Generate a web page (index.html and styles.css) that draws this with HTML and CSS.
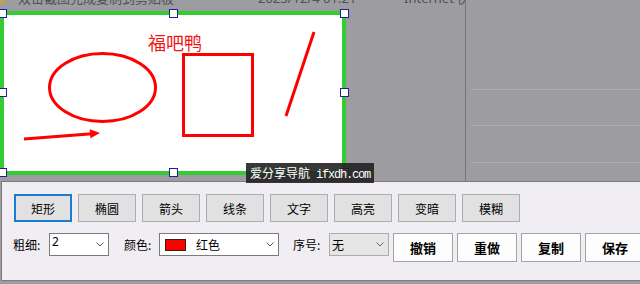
FILE: index.html
```html
<!DOCTYPE html>
<html lang="zh-CN">
<head>
<meta charset="utf-8">
<title>截图编辑</title>
<link rel="stylesheet" href="styles.css">
</head>
<body>
<div class="screen">
  <span class="bg-icon"></span>
  <span class="bg-text t1">双击截图完成复制到剪贴板</span>
  <span class="bg-text t2">2023/12/4 01:21</span>
  <span class="bg-text t3">Internet 快捷方式</span>
  <div class="bg-divider"></div>
  <div class="bg-hline h1"></div>
  <div class="bg-hline h2"></div>
  <div class="bg-hline h3"></div>

  <div class="capture">
    <svg class="drawing" viewBox="4 15 338 156" width="338" height="156">
      <text x="148" y="50" class="draw-text">福吧鸭</text>
      <ellipse cx="102.5" cy="87.5" rx="53" ry="34" fill="none" stroke="#f00" stroke-width="3"/>
      <rect x="183.5" y="54.5" width="69" height="81" fill="none" stroke="#f00" stroke-width="3"/>
      <line x1="314" y1="32" x2="286" y2="116" stroke="#f00" stroke-width="3"/>
      <line x1="24" y1="139" x2="92" y2="133.8" stroke="#f00" stroke-width="3"/>
      <polygon points="100,133 90.4,138.3 89.7,129.3" fill="#f00"/>
    </svg>
  </div>

  <span class="handle hx0 hy0"></span>
  <span class="handle hx1 hy0"></span>
  <span class="handle hx2 hy0"></span>
  <span class="handle hx0 hy1"></span>
  <span class="handle hx2 hy1"></span>
  <span class="handle hx0 hy2"></span>
  <span class="handle hx1 hy2"></span>
  <span class="handle hx2 hy2"></span>

  <div class="watermark"><span class="wm-cn">爱分享导航</span><span class="wm-en"> ifxdh.com</span></div>
</div>

<div class="panel">
  <div class="tools">
    <button class="tool active">矩形</button>
    <button class="tool">椭圆</button>
    <button class="tool">箭头</button>
    <button class="tool">线条</button>
    <button class="tool">文字</button>
    <button class="tool">高亮</button>
    <button class="tool">变暗</button>
    <button class="tool">模糊</button>
  </div>
  <div class="opts">
    <span class="label lbl-size">粗细:</span>
    <div class="combo combo-size">
      <span class="combo-val">2</span>
      <svg class="chev" width="8" height="5" viewBox="0 0 8 5"><path d="M0.5 0.5 L4 4 L7.5 0.5" fill="none" stroke="#555" stroke-width="1"/></svg>
    </div>
    <span class="label lbl-color">颜色:</span>
    <div class="combo combo-color">
      <span class="swatch"></span>
      <span class="combo-val color-name">红色</span>
      <svg class="chev" width="8" height="5" viewBox="0 0 8 5"><path d="M0.5 0.5 L4 4 L7.5 0.5" fill="none" stroke="#555" stroke-width="1"/></svg>
    </div>
    <span class="label lbl-num">序号:</span>
    <div class="combo combo-num">
      <span class="combo-val">无</span>
      <svg class="chev" width="8" height="5" viewBox="0 0 8 5"><path d="M0.5 0.5 L4 4 L7.5 0.5" fill="none" stroke="#666" stroke-width="1"/></svg>
    </div>
    <div class="actions">
      <button class="act">撤销</button>
      <button class="act">重做</button>
      <button class="act">复制</button>
      <button class="act">保存</button>
    </div>
  </div>
</div>
</body>
</html>
```

FILE: styles.css
```css
* { box-sizing: border-box; }

html, body {
  margin: 0;
  padding: 0;
}

body {
  width: 640px;
  height: 284px;
  overflow: hidden;
  background: #9d9da1;
  font-family: "Noto Sans CJK SC", "Noto Sans", sans-serif;
  font-size: 12px;
  color: #000;
}

.screen {
  position: relative;
  height: 181px;
}

.bg-icon {
  position: absolute;
  left: 0;
  top: 0;
  width: 6px;
  height: 4px;
  background: #b9a25a;
}

.bg-text {
  position: absolute;
  top: -10px;
  font-size: 13px;
  line-height: 16px;
  color: #505054;
  white-space: nowrap;
}
.t1 { left: 18px; }
.t2 { left: 258px; font-family: "Noto Sans", sans-serif; }
.t3 { left: 404px; font-family: "Noto Sans", sans-serif; width: 62px; overflow: hidden; }

.bg-divider {
  position: absolute;
  left: 465px;
  top: 0;
  width: 1px;
  height: 181px;
  background: #747478;
}

.bg-hline {
  position: absolute;
  left: 471px;
  right: 0;
  height: 1px;
  background: #adadb1;
}
.h1 { top: 89px; }
.h2 { top: 125px; }
.h3 { top: 162px; }

.capture {
  position: absolute;
  left: 0;
  top: 11px;
  width: 346px;
  height: 164px;
  border: 4px solid #33cc33;
  background: #fff;
}

.drawing {
  display: block;
}

.draw-text {
  font-family: "Noto Sans CJK SC", sans-serif;
  font-size: 18px;
  fill: #f01515;
}

.handle {
  position: absolute;
  width: 9px;
  height: 9px;
  background: #fff;
  border: 1px solid #1f1f9c;
}
.hx0 { left: -2px; }
.hx1 { left: 169px; }
.hx2 { left: 340px; }
.hy0 { top: 9px; }
.hy1 { top: 88px; }
.hy2 { top: 168px; }

.watermark {
  position: absolute;
  left: 246px;
  top: 163px;
  width: 128px;
  height: 20px;
  padding-left: 4px;
  background: rgba(34, 34, 34, 0.9);
  color: #fff;
  line-height: 20px;
  white-space: nowrap;
  font-size: 12px;
}
.wm-en {
  font-family: "Liberation Mono", monospace;
  letter-spacing: -1.2px;
}

.panel {
  margin-left: 1px;
  height: 100px;
  border: 1px solid #7c7c7c;
  border-right: none;
  background: #f0eef2;
  padding: 12px 0 0 12px;
}

.tools {
  display: flex;
  gap: 6px;
}

.tool {
  flex-shrink: 0;
  width: 58px;
  height: 28px;
  margin: 0;
  padding: 0;
  border: 1px solid #adadad;
  background: #e1e1e1;
  font-family: inherit;
  font-size: 12px;
  color: #000;
}
.tool.active {
  border: 2px solid #1a7cd2;
}

.opts {
  display: flex;
  align-items: flex-start;
  margin-top: 11px;
}
.opts > * {
  flex-shrink: 0;
}

.label {
  line-height: 23px;
  white-space: nowrap;
}
.lbl-size { margin-left: -1px; width: 36px; }
.lbl-color { margin-left: 15px; width: 35px; }
.lbl-num { margin-left: 14px; width: 36px; }

.combo {
  position: relative;
  display: flex;
  align-items: center;
  height: 23px;
  border: 1px solid #7a7a7a;
  background: #fff;
  padding-left: 2px;
}
.combo-size { width: 60px; }
.combo-color { width: 120px; padding-left: 5px; }
.combo-num {
  width: 60px;
  background: #e6e6e7;
  border-color: #acacac;
}

.combo-val {
  line-height: 21px;
}
.combo-size .combo-val {
  font-family: "Noto Sans", sans-serif;
  align-self: flex-start;
  line-height: 16px;
}

.swatch {
  width: 21px;
  height: 12px;
  background: #f00;
  border: 1px solid #3a1a1a;
}
.color-name {
  margin-left: 10px;
}

.chev {
  position: absolute;
  right: 4px;
  top: 8px;
}

.actions {
  display: flex;
  gap: 4px;
  margin-left: 4px;
}

.act {
  flex-shrink: 0;
  width: 60px;
  height: 29px;
  margin: 0;
  padding: 0;
  border: 1px solid #a3a3a3;
  background: #fdfdfd;
  font-family: inherit;
  font-size: 13px;
  font-weight: bold;
  color: #000;
}
```
